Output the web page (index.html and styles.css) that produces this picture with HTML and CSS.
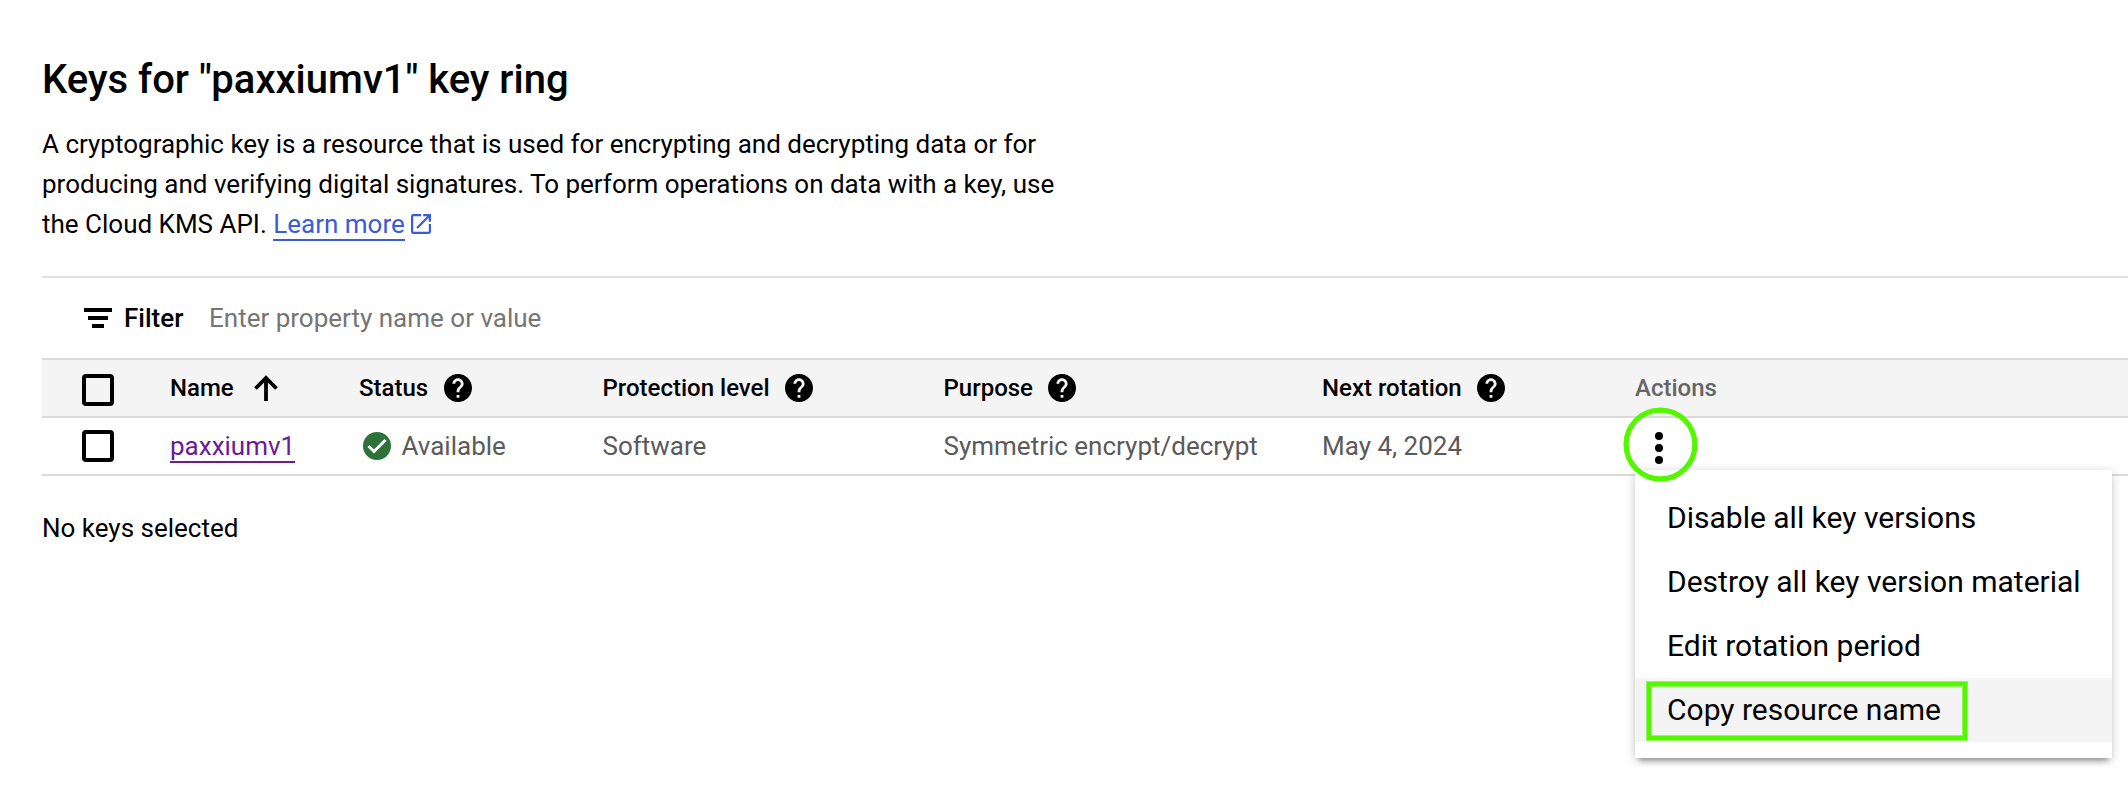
FILE: index.html
```html
<!DOCTYPE html>
<html lang="en">
<head>
<meta charset="utf-8">
<title>Keys</title>
<link rel="stylesheet" href="styles.css">
</head>
<body>
<svg class="sprite" width="0" height="0" aria-hidden="true">
  <symbol id="help" viewBox="2 2 20 20"><path d="M12 2C6.48 2 2 6.48 2 12s4.48 10 10 10 10-4.48 10-10S17.52 2 12 2zm1 17h-2v-2h2v2zm2.07-7.75l-.9.92C13.45 12.9 13 13.5 13 15h-2v-.5c0-1.1.45-2.1 1.17-2.83l1.24-1.26c.37-.36.59-.86.59-1.41 0-1.1-.9-2-2-2s-2 .9-2 2H8c0-2.21 1.79-4 4-4s4 1.790 4 4c0 .88-.36 1.680-.93 2.250z"/></symbol>
</svg>
<main class="page">
  <h1 class="title">Keys for "paxxiumv1" key ring</h1>
  <p class="intro"><span>A cryptographic key is a resource that is used for encrypting and decrypting data or for</span><br><span>producing and verifying digital signatures. To perform operations on data with a key, use</span><br><span>the Cloud KMS API. </span><a class="link learn">Learn more</a><svg class="external" viewBox="3 3 18 18"><path d="M19 19H5V5h7V3H5a2 2 0 0 0-2 2v14a2 2 0 0 0 2 2h14c1.1 0 2-.9 2-2v-7h-2v7zM14 3v2h3.59l-9.83 9.83 1.41 1.41L19 6.41V10h2V3h-7z"/></svg></p>
  <div class="filter">
    <svg class="filter-icon" viewBox="0 0 28 20"><path d="M0 0h28v4H0zM4 8h20v4H4zM8 16h12v4H8z"/></svg>
    <span class="filter-label">Filter</span>
    <span class="filter-hint">Enter property name or value</span>
  </div>
  <div class="row head">
    <div class="cell"><span class="checkbox"></span></div>
    <div class="cell"><span>Name</span><svg class="sort" viewBox="0 0 24 26"><path d="M12 26V3M1.500 13.500L12 3l10.500 10.500"/></svg></div>
    <div class="cell"><span>Status</span><svg class="help"><use href="#help"/></svg></div>
    <div class="cell"><span>Protection level</span><svg class="help"><use href="#help"/></svg></div>
    <div class="cell"><span>Purpose</span><svg class="help"><use href="#help"/></svg></div>
    <div class="cell"><span>Next rotation</span><svg class="help"><use href="#help"/></svg></div>
    <div class="cell muted"><span>Actions</span></div>
  </div>
  <div class="row data">
    <div class="cell"><span class="checkbox"></span></div>
    <div class="cell"><a class="link visited">paxxiumv1</a></div>
    <div class="cell"><svg class="ok" viewBox="0 0 28 28"><circle cx="14" cy="14" r="14"/><path d="M5.500 14l5.500 5.500L22.500 8"/></svg><span>Available</span></div>
    <div class="cell">Software</div>
    <div class="cell">Symmetric encrypt/decrypt</div>
    <div class="cell">May 4, 2024</div>
    <div class="cell actions">
      <svg class="dots" viewBox="0 0 8 32"><circle cx="4" cy="4" r="4"/><circle cx="4" cy="16" r="4"/><circle cx="4" cy="28" r="4"/></svg>
      <div class="menu">
        <div class="item">Disable all key versions</div>
        <div class="item">Destroy all key version material</div>
        <div class="item">Edit rotation period</div>
        <div class="item active">Copy resource name<span class="mark-box"></span></div>
      </div>
      <svg class="mark-circle" viewBox="0 0 75 75"><circle cx="37.500" cy="37.500" r="34.400"/></svg>
    </div>
  </div>
  <p class="summary">No keys selected</p>
</main>
</body>
</html>
```
FILE: styles.css
```css
* { box-sizing: border-box; }
body { margin: 0; background: #fff; color: #000; font: 26px/40px Roboto, sans-serif; overflow: hidden; }
.sprite { position: absolute; }
.page { width: 2128px; height: 792px; padding: 55px 0 0 42px; overflow: hidden; }
.title { margin: 0; font-size: 40px; line-height: 50px; font-weight: 500; white-space: nowrap; }
.intro { margin: 19px 0 0; height: 152px; white-space: nowrap; }
.link { display: inline-block; line-height: 30px; border-bottom: 2px solid; }
.learn { color: #3c5bd6; }
.external { width: 20px; height: 20px; margin-left: 6px; fill: #3c5bd6; vertical-align: -1px; }
.filter { height: 82px; border-top: 2px solid #e0e0e0; display: flex; align-items: center; padding-left: 42px; }
.filter-icon { width: 28px; height: 20px; margin-right: 12px; }
.filter-label { font-weight: 500; width: 85px; }
.filter-hint { color: #757575; }
.row { display: grid; grid-template-columns: 128px 189px 243.5px 341px 378.5px 313px 1fr; height: 58px; border-top: 2px solid #dadada; }
.head { background: #f4f4f4; font-size: 24px; font-weight: 500; }
.data { height: 60px; border-bottom: 2px solid #dadada; color: #5a5a5a; }
.cell { display: flex; align-items: center; white-space: nowrap; }
.checkbox { width: 32px; height: 32px; margin-left: 40px; border: 4px solid #000; border-radius: 4px; }
.head .checkbox { margin-top: 4px; }
.sort { width: 24px; height: 26px; margin-left: 20px; fill: none; stroke: #000; stroke-width: 3.8; }
.help { width: 28px; height: 28px; margin-left: 15.5px; }
.muted { color: #666; }
.visited { color: #6a1b9a; margin-top: 2px; }
.ok { width: 28px; height: 28px; margin: 0 10.5px 0 4px; fill: #2d7238; }
.ok path { fill: none; stroke: #fff; stroke-width: 3; }
.actions { position: relative; }
.dots { width: 8px; height: 32px; margin: 4px 0 0 20px; fill: #000; }
.menu { position: absolute; left: 0; top: 52px; width: 477px; padding: 16px 0; background: #fff; color: #000; font-size: 30px; box-shadow: 0 6px 6px -4px rgba(0,0,0,.4), 0 2px 10px rgba(0,0,0,.2); }
.item { height: 64px; line-height: 64px; padding-left: 32px; }
.active { position: relative; background: #f4f4f4; }
.mark-box { position: absolute; left: 12px; top: 4px; width: 320px; height: 58px; border: 4px solid #55f700; box-shadow: 0 0 0 1px rgba(85,247,0,.6), inset 0 0 0 1px rgba(85,247,0,.6); }
.mark-circle { position: absolute; left: -12.5px; top: -11.5px; width: 75px; height: 75px; fill: none; stroke: #55f700; stroke-width: 5.3; }
.summary { margin: 32px 0 0; }
```
